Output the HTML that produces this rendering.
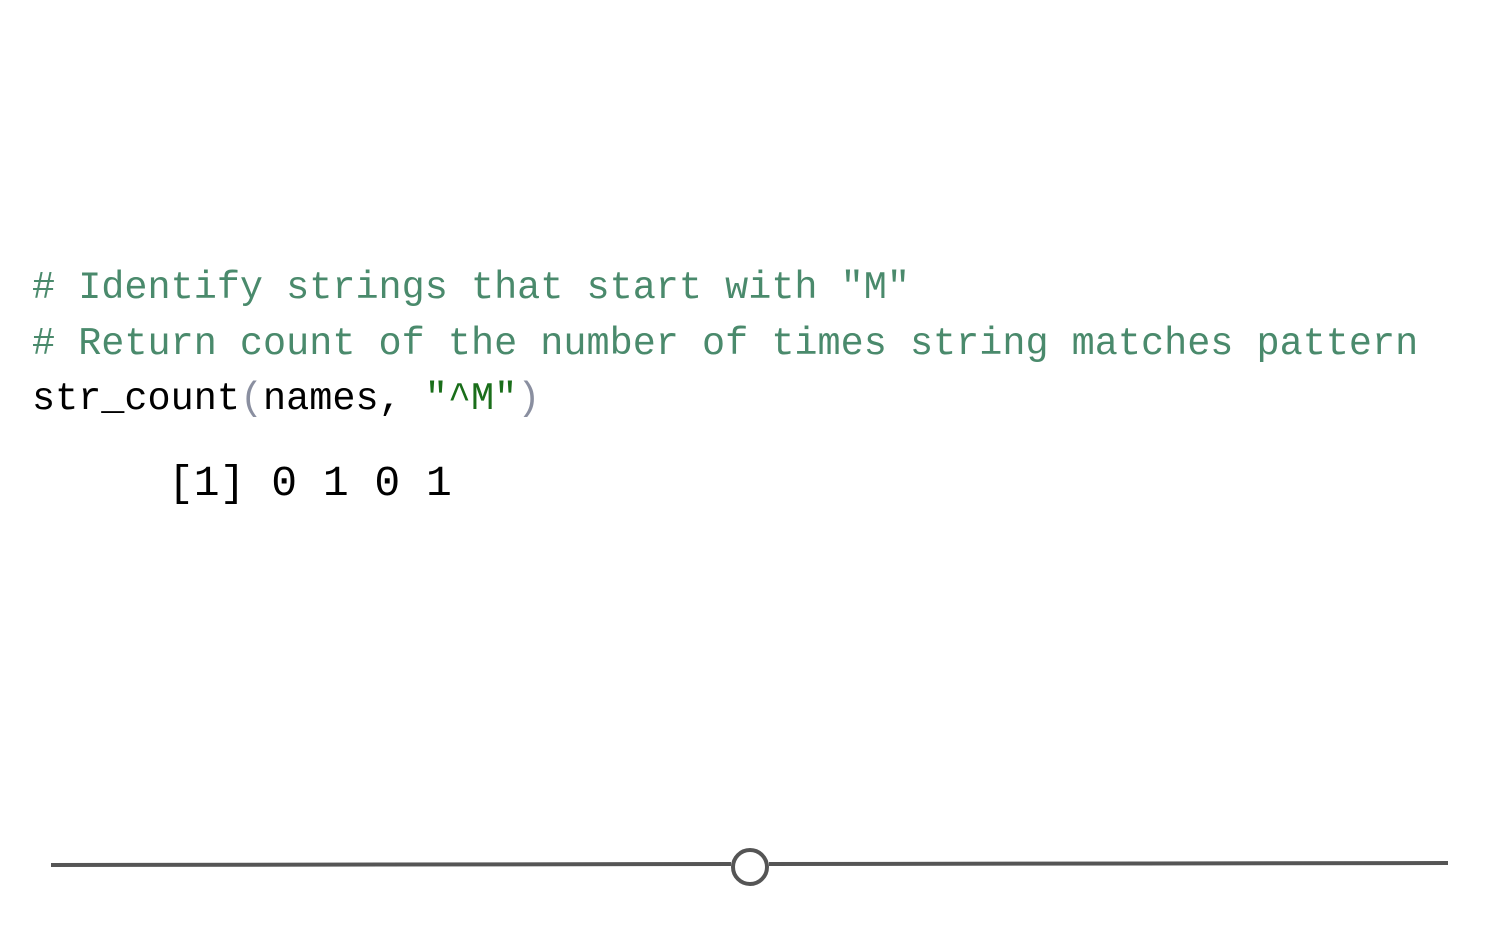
<!DOCTYPE html>
<html><head><style>
html,body{margin:0;padding:0;background:#fff;width:1500px;height:938px;overflow:hidden;position:relative}
.t{position:absolute;left:32px;font-family:"Liberation Mono",monospace;font-size:38.5px;white-space:pre;line-height:1}
.c{color:#4a8a6c}
.o{position:absolute;left:168px;top:462px;font-family:"Liberation Mono",monospace;font-size:43px;white-space:pre;color:#000;line-height:1}
</style></head><body>
<div class="t c" style="top:269px"># Identify strings that start with "M"</div>
<div class="t c" style="top:325px"># Return count of the number of times string matches pattern</div>
<div class="t" style="top:380px;color:#000">str_count<span style="color:#8a8fa0">(</span>names, <span style="color:#1a6e1a">"^M"</span><span style="color:#8a8fa0">)</span></div>
<div class="o">[1] 0 1 0 1</div>
<svg width="1500" height="938" style="position:absolute;left:0;top:0">
<line x1="51" y1="865" x2="731" y2="864" stroke="#555" stroke-width="4"/>
<line x1="769" y1="864" x2="1448" y2="863" stroke="#555" stroke-width="4"/>
<circle cx="750" cy="867" r="17" fill="#fff" stroke="#555" stroke-width="4"/>
</svg>
</body></html>
